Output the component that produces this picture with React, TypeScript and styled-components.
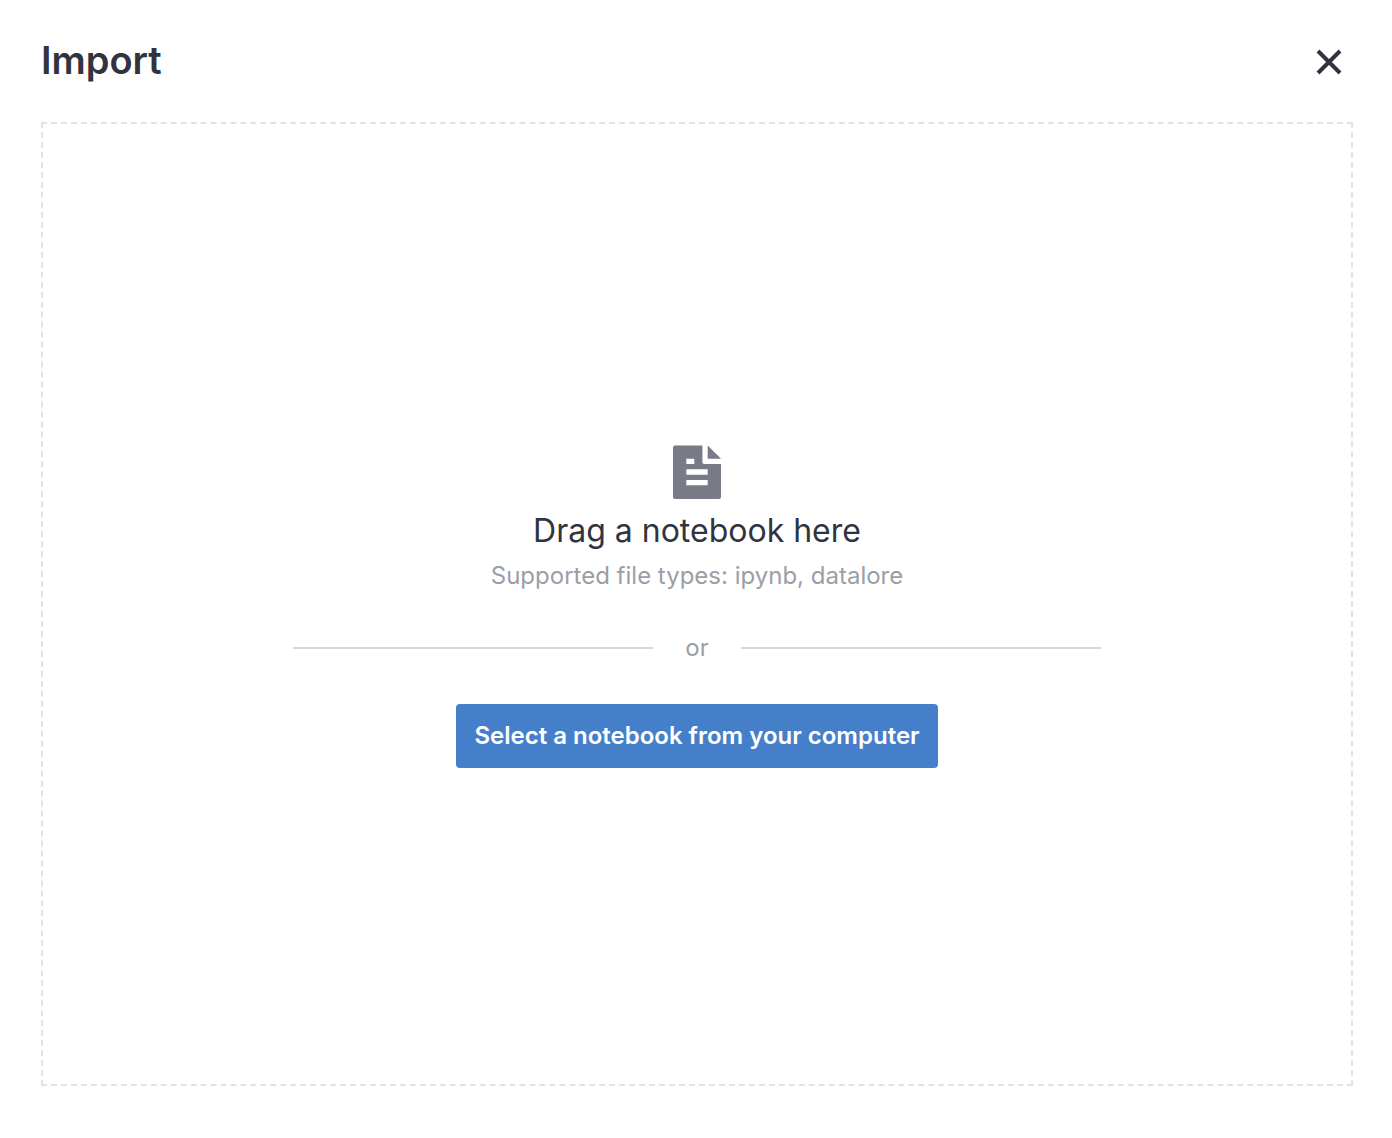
import React, { useRef } from "react";
import styled, { createGlobalStyle } from "styled-components";

const GlobalStyle = createGlobalStyle`
  *, *::before, *::after { box-sizing: border-box; }
  body {
    margin: 0;
    background: #fff;
    color: #31343f;
    font-family: Inter, "Liberation Sans", sans-serif;
  }
`;

const Dialog = styled.main`
  display: flex;
  flex-direction: column;
  min-height: 100vh;
  padding: 36px 39px 52px 41px;
`;

const Header = styled.header`
  display: flex;
  align-items: flex-start;
  justify-content: space-between;
  margin-bottom: 36px;
`;

const Title = styled.h1`
  margin: 0;
  font-size: 38px;
  line-height: 48px;
  font-weight: 600;
`;

const CloseButton = styled.button`
  display: flex;
  align-items: center;
  justify-content: center;
  width: 48px;
  height: 50px;
  padding: 2px 0 0;
  border: 0;
  background: none;
  color: inherit;
  cursor: pointer;
`;

const DropZone = styled.section`
  flex: 1;
  display: flex;
  flex-direction: column;
  align-items: center;
  justify-content: center;
  padding-top: 5px;
  border: 2px dashed #e2e2e2;
`;

const FileIcon = styled.svg`
  display: block;
  margin-bottom: 11px;
`;

const Prompt = styled.h2`
  margin: 0;
  font-size: 32px;
  line-height: 42px;
  font-weight: 400;
`;

const Hint = styled.p`
  margin: 4px 0 0;
  color: #9c9ea6;
  font-size: 24px;
  line-height: 40px;
`;

const Divider = styled.div`
  display: flex;
  align-items: center;
  gap: 32px;
  width: 808px;
  max-width: 100%;
  margin: 32px 0 36px;
  color: #9c9ea6;
  font-size: 24px;
  line-height: 40px;

  &::before, &::after {
    content: "";
    flex: 1;
    height: 2px;
    background: #d6d6dc;
  }
`;

const SelectButton = styled.button`
  height: 64px;
  padding: 0 18px 2px;
  border: 0;
  border-radius: 4px;
  background: #467fc9;
  color: #fff;
  font-family: inherit;
  font-size: 24px;
  font-weight: 600;
  cursor: pointer;
`;

export default function App() {
  const picker = useRef<HTMLInputElement>(null);
  return (
    <>
      <GlobalStyle />
      <Dialog>
        <Header>
          <Title>Import</Title>
          <CloseButton type="button" aria-label="Close">
            <svg width="28" height="28" viewBox="0 0 28 28" fill="none" stroke="currentColor" strokeWidth="4">
              <path d="M3 3 25 25M25 3 3 25" />
            </svg>
          </CloseButton>
        </Header>
        <DropZone>
          <FileIcon width="48" height="54" viewBox="0 0 48 54" fill="#787b85" aria-hidden="true">
            <path fillRule="evenodd" d="M2 0.4H29.4V16.4Q29.4 19 32 19H48V52Q48 54 46 54H2Q0 54 0 52V2.4Q0 0.4 2 0.4ZM13.3 13.8V19H21.3V13.8ZM13.3 24.3V29.7H34.7V24.3ZM13.3 35V40.3H34.7V35Z" />
            <path d="M34.7 0.4 48 13.8H34.7Z" />
          </FileIcon>
          <Prompt>Drag a notebook here</Prompt>
          <Hint>Supported file types: ipynb, datalore</Hint>
          <Divider>or</Divider>
          <SelectButton type="button" onClick={() => picker.current?.click()}>
            Select a notebook from your computer
          </SelectButton>
          <input ref={picker} type="file" accept=".ipynb,.datalore" aria-label="Notebook file" hidden />
        </DropZone>
      </Dialog>
    </>
  );
}
